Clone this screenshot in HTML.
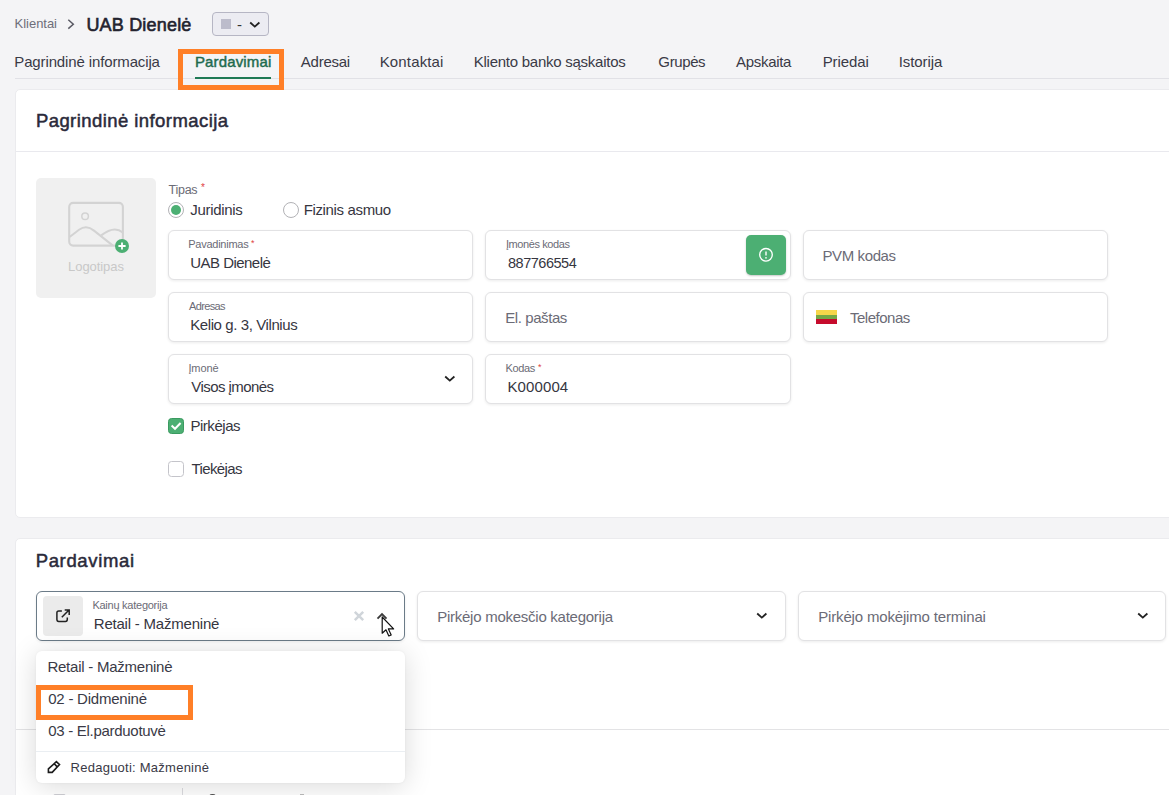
<!DOCTYPE html>
<html lang="lt">
<head>
<meta charset="utf-8">
<title>UAB Dienelė</title>
<style>
*{box-sizing:border-box;margin:0;padding:0}
html,body{width:1169px;height:795px;overflow:hidden;background:#f4f4f6}
body{font-family:"Liberation Sans",sans-serif;color:#2a2a35;position:relative}
.abs{position:absolute;white-space:nowrap}
.t,.s{position:absolute;white-space:nowrap;line-height:1}
.s{color:#e0413f}
.card{position:absolute;background:#fff;border:1px solid #ebebee;border-radius:5px}
.field{position:absolute;height:50px;background:#fff;border:1px solid #e2e2e4;border-radius:6px;box-shadow:0 1px 3px rgba(0,0,0,.08)}
.obox{position:absolute;border:5px solid #ff7f27}
</style>
</head>
<body>

<!-- header -->
<svg class="abs" style="left:66px;top:18px" width="10" height="12" viewBox="0 0 10 12"><path d="M2.3 1.8 L7.3 6.2 L2.3 10.6" fill="none" stroke="#5a5a64" stroke-width="1.5"/></svg>
<div class="abs" style="left:212px;top:12px;width:57px;height:24px;border:1px solid #b6b6c4;border-radius:4px;background:#ececf2"></div>
<div class="abs" style="left:221px;top:19px;width:10px;height:10px;background:#bcbccb"></div>
<svg class="abs" style="left:248px;top:19px" width="14" height="11" viewBox="0 0 14 11"><path d="M2.2 3.5 L6.8 7.6 L11.4 3.5" fill="none" stroke="#222" stroke-width="1.8"/></svg>

<!-- tabs -->
<div class="abs" style="left:15px;top:78px;width:1154px;height:1px;background:#e1e1e6"></div>
<div class="abs" style="left:195px;top:77px;width:76px;height:2px;background:#1f7a55"></div>

<!-- card 1 -->
<div class="card" style="left:15px;top:89px;width:1200px;height:429px"></div>
<div class="abs" style="left:16px;top:151px;width:1153px;height:1px;background:#e9e9ee"></div>

<!-- logo -->
<div class="abs" style="left:36px;top:178px;width:120px;height:120px;background:#f0f0f0;border-radius:5px"></div>
<svg class="abs" style="left:66px;top:199px" width="66" height="58" viewBox="0 0 66 58">
  <rect x="3.2" y="3.9" width="53.7" height="42.7" rx="4" fill="none" stroke="#d3d3d3" stroke-width="2.1"/>
  <circle cx="19.1" cy="17.2" r="3.3" fill="none" stroke="#d3d3d3" stroke-width="1.5"/>
  <path d="M3.6 38 L13 30.8 Q20.5 25.5 28 31.6 L46.6 46.4" fill="none" stroke="#d3d3d3" stroke-width="2"/>
  <path d="M35.2 36.4 Q48 26.5 56.7 33.4" fill="none" stroke="#d3d3d3" stroke-width="2"/>
  <circle cx="56" cy="47" r="7" fill="#4caf73"/>
  <path d="M56 43.4 V50.6 M52.4 47 H59.6" stroke="#fff" stroke-width="1.8"/>
</svg>

<!-- Tipas -->
<div class="s" style="left:201px;top:183px;font-size:10px">*</div>
<div class="abs" style="left:168px;top:202px;width:16px;height:16px;border:1px solid #b2b2b6;border-radius:50%;background:#fff"></div>
<div class="abs" style="left:171px;top:205px;width:10px;height:10px;border-radius:50%;background:#4caf73"></div>
<div class="abs" style="left:283px;top:202px;width:16px;height:16px;border:1px solid #b2b2b6;border-radius:50%;background:#fff"></div>

<!-- fields row 1 -->
<div class="field" style="left:168px;top:230px;width:305px"></div>
<div class="s" style="left:251px;top:239px;font-size:9px">*</div>
<div class="field" style="left:485px;top:230px;width:306px"></div>
<div class="abs" style="left:746px;top:235px;width:40px;height:40px;background:#4caf73;border-radius:5px;box-shadow:0 1px 2px rgba(0,0,0,.22)"></div>
<svg class="abs" style="left:758px;top:247px" width="16" height="16" viewBox="0 0 16 16"><circle cx="8" cy="7.8" r="6.3" fill="none" stroke="#fff" stroke-width="1.35"/><path d="M8 4.5 V8.5" stroke="#fff" stroke-width="1.4"/><circle cx="8" cy="10.8" r="0.85" fill="#fff"/></svg>
<div class="field" style="left:803px;top:230px;width:305px"></div>

<!-- row 2 -->
<div class="field" style="left:168px;top:292px;width:305px"></div>
<div class="field" style="left:485px;top:292px;width:306px"></div>
<div class="field" style="left:803px;top:292px;width:305px"></div>
<div class="abs" style="left:816px;top:310px;width:21px;height:14px;background:linear-gradient(#f6d64a 0 5px,#76a746 5px 9px,#c60b2c 9px)"></div>

<!-- row 3 -->
<div class="field" style="left:168px;top:354px;width:305px"></div>
<svg class="abs" style="left:443px;top:373px" width="14" height="11" viewBox="0 0 14 11"><path d="M2.2 3.5 L6.8 7.6 L11.4 3.5" fill="none" stroke="#222" stroke-width="1.8"/></svg>
<div class="field" style="left:485px;top:354px;width:306px"></div>
<div class="s" style="left:538px;top:363px;font-size:9px">*</div>

<!-- checkboxes -->
<div class="abs" style="left:168px;top:418px;width:16px;height:16px;border-radius:3.5px;background:#4caf73;border:1px solid #3a9a60"></div>
<svg class="abs" style="left:168px;top:418px" width="16" height="16" viewBox="0 0 16 16"><path d="M3.6 7.6 L7 10.8 L12.6 5" fill="none" stroke="#fff" stroke-width="2"/></svg>
<div class="abs" style="left:168px;top:461px;width:16px;height:16px;border-radius:3.5px;background:#fff;border:1px solid #c4c4ca"></div>

<!-- card 2 -->
<div class="card" style="left:15px;top:538px;width:1200px;height:300px"></div>
<div class="abs" style="left:16px;top:729px;width:1153px;height:1px;background:#e3e3e5"></div>

<div class="field" style="left:36px;top:591px;width:369px;border-color:#6b7b88"></div>
<div class="abs" style="left:43px;top:596px;width:40px;height:40px;background:#ebebeb;border-radius:4px"></div>
<svg class="abs" style="left:55px;top:608px" width="16" height="16" viewBox="0 0 16 16"><path d="M6.9 3 H3.7 Q1.9 3 1.9 4.8 V11.6 Q1.9 13.4 3.7 13.4 H10.5 Q12.3 13.4 12.3 11.6 V9.4" fill="none" stroke="#222" stroke-width="1.5"/><path d="M6.8 9.2 L14 2 M9.7 1.9 H14.2 V6.9" fill="none" stroke="#222" stroke-width="1.5"/></svg>
<svg class="abs" style="left:353px;top:610px" width="12" height="12" viewBox="0 0 12 12"><path d="M1.8 1.8 L10.2 10.2 M10.2 1.8 L1.8 10.2" stroke="#d0d5da" stroke-width="2.5"/></svg>
<svg class="abs" style="left:375px;top:610px" width="14" height="11" viewBox="0 0 14 11"><path d="M2.5 8.6 L7 4.1 L11.5 8.6" fill="none" stroke="#3a3a3a" stroke-width="1.9"/></svg>
<div class="field" style="left:417px;top:591px;width:369px"></div>
<svg class="abs" style="left:755px;top:610px" width="14" height="11" viewBox="0 0 14 11"><path d="M2.2 3.5 L6.8 7.6 L11.4 3.5" fill="none" stroke="#222" stroke-width="1.8"/></svg>
<div class="field" style="left:798px;top:591px;width:368px"></div>
<svg class="abs" style="left:1136px;top:610px" width="14" height="11" viewBox="0 0 14 11"><path d="M2.2 3.5 L6.8 7.6 L11.4 3.5" fill="none" stroke="#222" stroke-width="1.8"/></svg>

<!-- bottom peek -->
<div class="abs" style="left:182px;top:788px;width:1px;height:10px;background:#dcdce0"></div>
<div class="abs" style="left:53px;top:794px;width:13px;height:6px;border:1px solid #cfcfd4;border-radius:2px"></div>
<div class="abs" style="left:209px;top:794px;width:7px;height:4px;background:#555;border-radius:3px 3px 0 0"></div>
<div class="abs" style="left:300px;top:794px;width:4px;height:3px;background:#bbb"></div>

<!-- dropdown -->
<div class="abs" style="left:36px;top:651px;width:369px;height:132px;background:#fff;border-radius:6px;box-shadow:0 3px 28px rgba(0,0,0,.15),0 0 3px rgba(0,0,0,.05)"></div>
<div class="abs" style="left:36px;top:751px;width:369px;height:1px;background:#eaeef2"></div>
<svg class="abs" style="left:47px;top:760px" width="15" height="15" viewBox="0 0 15 15"><path d="M1.4 12.4 L1.4 8.9 L9.4 1.7 L12.5 4.6 L5.2 12.4 Z M7.3 3.8 L10.2 6.9" fill="none" stroke="#1c1c1c" stroke-width="1.6" stroke-linejoin="miter"/></svg>

<div class="t" id="kl" style="left:14.62px;top:17px;font-size:13px;color:#6e6e7a;letter-spacing:-0.039px;">Klientai</div>
<div class="t" id="title" style="left:86.38px;top:16px;font-size:18px;color:#23232f;letter-spacing:0.192px;-webkit-text-stroke:0.6px #23232f;">UAB Dienelė</div>
<div class="t" id="dash" style="left:236.92px;top:0px;font-size:15px;color:#333;letter-spacing:0.000px;top:17px;">-</div>
<div class="t" id="tab1" style="left:14.29px;top:54px;font-size:15px;color:#3a3a46;letter-spacing:-0.130px;">Pagrindinė informacija</div>
<div class="t" id="tab2" style="left:194.90px;top:54px;font-size:15px;color:#1e6b4f;letter-spacing:0.145px;-webkit-text-stroke:0.45px #1e6b4f;">Pardavimai</div>
<div class="t" id="tab3" style="left:300.85px;top:54px;font-size:15px;color:#3a3a46;letter-spacing:-0.254px;">Adresai</div>
<div class="t" id="tab4" style="left:379.73px;top:54px;font-size:15px;color:#3a3a46;letter-spacing:0.144px;">Kontaktai</div>
<div class="t" id="tab5" style="left:473.73px;top:54px;font-size:15px;color:#3a3a46;letter-spacing:-0.252px;">Kliento banko sąskaitos</div>
<div class="t" id="tab6" style="left:658.37px;top:54px;font-size:15px;color:#3a3a46;letter-spacing:-0.386px;">Grupės</div>
<div class="t" id="tab7" style="left:736.10px;top:54px;font-size:15px;color:#3a3a46;letter-spacing:-0.324px;">Apskaita</div>
<div class="t" id="tab8" style="left:822.73px;top:54px;font-size:15px;color:#3a3a46;letter-spacing:-0.103px;">Priedai</div>
<div class="t" id="tab9" style="left:898.65px;top:54px;font-size:15px;color:#3a3a46;letter-spacing:-0.065px;">Istorija</div>
<div class="t" id="h1" style="left:35.90px;top:112px;font-size:18.5px;color:#2a2a3a;letter-spacing:0.434px;-webkit-text-stroke:0.5px #2a2a3a;">Pagrindinė informacija</div>
<div class="t" id="logot" style="left:68.09px;top:260px;font-size:13px;color:#c8c8c8;letter-spacing:-0.065px;">Logotipas</div>
<div class="t" id="tipas" style="left:168.55px;top:184px;font-size:12.5px;color:#6b6b76;letter-spacing:-0.268px;">Tipas</div>
<div class="t" id="r1" style="left:190.22px;top:202px;font-size:15px;color:#36363f;letter-spacing:-0.299px;">Juridinis</div>
<div class="t" id="r2" style="left:303.67px;top:202px;font-size:15px;color:#36363f;letter-spacing:-0.353px;">Fizinis asmuo</div>
<div class="t" id="l1" style="left:188.31px;top:239px;font-size:11px;color:#6b6b76;letter-spacing:-0.261px;">Pavadinimas</div>
<div class="t" id="v1" style="left:190.28px;top:255px;font-size:15px;color:#36363f;letter-spacing:-0.534px;">UAB Dienelė</div>
<div class="t" id="l2" style="left:505.94px;top:239px;font-size:11px;color:#6b6b76;letter-spacing:-0.407px;">Įmonės kodas</div>
<div class="t" id="v2" style="left:507.98px;top:256px;font-size:14.5px;color:#36363f;letter-spacing:-0.471px;">887766554</div>
<div class="t" id="p3" style="left:822.41px;top:248px;font-size:15px;color:#6b6b76;letter-spacing:-0.382px;">PVM kodas</div>
<div class="t" id="l4" style="left:189.02px;top:301px;font-size:11px;color:#6b6b76;letter-spacing:-0.654px;">Adresas</div>
<div class="t" id="v4" style="left:190.25px;top:317px;font-size:15px;color:#36363f;letter-spacing:-0.410px;">Kelio g. 3, Vilnius</div>
<div class="t" id="p5" style="left:505.29px;top:310px;font-size:15px;color:#6b6b76;letter-spacing:-0.425px;">El. paštas</div>
<div class="t" id="p6" style="left:849.90px;top:310px;font-size:15px;color:#6b6b76;letter-spacing:-0.467px;">Telefonas</div>
<div class="t" id="l7" style="left:188.43px;top:363px;font-size:11px;color:#6b6b76;letter-spacing:-0.104px;">Įmonė</div>
<div class="t" id="v7" style="left:191.26px;top:379px;font-size:15px;color:#36363f;letter-spacing:-0.556px;">Visos įmonės</div>
<div class="t" id="l8" style="left:505.56px;top:363px;font-size:11px;color:#6b6b76;letter-spacing:-0.367px;">Kodas</div>
<div class="t" id="v8" style="left:507.41px;top:379px;font-size:15px;color:#36363f;letter-spacing:0.125px;">K000004</div>
<div class="t" id="c1" style="left:190.41px;top:418px;font-size:15px;color:#36363f;letter-spacing:-0.455px;">Pirkėjas</div>
<div class="t" id="c2" style="left:191.43px;top:461px;font-size:15px;color:#36363f;letter-spacing:-0.608px;">Tiekėjas</div>
<div class="t" id="h2" style="left:35.69px;top:552px;font-size:18.5px;color:#2a2a3a;letter-spacing:0.643px;-webkit-text-stroke:0.5px #2a2a3a;">Pardavimai</div>
<div class="t" id="l9" style="left:92.41px;top:600px;font-size:11px;color:#6b6b76;letter-spacing:-0.250px;">Kainų kategorija</div>
<div class="t" id="v9" style="left:93.78px;top:616px;font-size:15px;color:#36363f;letter-spacing:-0.208px;">Retail - Mažmeninė</div>
<div class="t" id="p10" style="left:437.25px;top:609px;font-size:15px;color:#6b6b76;letter-spacing:-0.260px;">Pirkėjo mokesčio kategorija</div>
<div class="t" id="p11" style="left:818.25px;top:609px;font-size:15px;color:#6b6b76;letter-spacing:-0.168px;">Pirkėjo mokėjimo terminai</div>
<div class="t" id="d1" style="left:47.41px;top:659px;font-size:15px;color:#3a3a46;letter-spacing:-0.239px;">Retail - Mažmeninė</div>
<div class="t" id="d2" style="left:48.19px;top:691px;font-size:15px;color:#3a3a46;letter-spacing:-0.218px;">02 - Didmeninė</div>
<div class="t" id="d3" style="left:48.19px;top:723px;font-size:15px;color:#3a3a46;letter-spacing:-0.286px;">03 - El.parduotuvė</div>
<div class="t" id="d4" style="left:70.60px;top:761px;font-size:13px;color:#3a3a46;letter-spacing:0.246px;">Redaguoti: Mažmeninė</div>

<div class="obox" style="left:178px;top:49px;width:106px;height:41px"></div>
<div class="obox" style="left:36px;top:685px;width:157px;height:35px"></div>

<!-- cursor -->
<svg class="abs" style="left:380px;top:615px" width="16" height="24" viewBox="0 0 16 24"><path d="M2.2 2 V18.2 L6 14.8 L8.8 21 L11.2 19.9 L8.4 13.9 H13.6 Z" fill="#fff" stroke="#111" stroke-width="1.2" stroke-linejoin="round"/></svg>

</body>
</html>
